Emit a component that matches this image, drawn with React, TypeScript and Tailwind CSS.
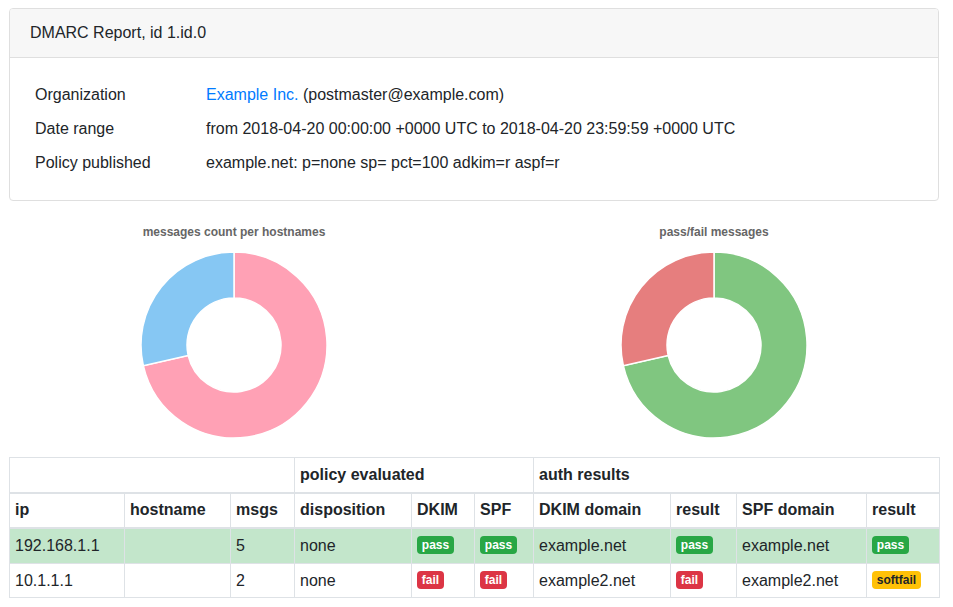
import React from "react";

type Seg = { value: number; color: string };

function arcPath(cx: number, cy: number, r0: number, r1: number, a0: number, a1: number) {
  const p = (r: number, a: number) => {
    const t = (a - 90) * (Math.PI / 180);
    return [cx + r * Math.cos(t), cy + r * Math.sin(t)];
  };
  const large = a1 - a0 > 180 ? 1 : 0;
  const [x0, y0] = p(r1, a0);
  const [x1, y1] = p(r1, a1);
  const [x2, y2] = p(r0, a1);
  const [x3, y3] = p(r0, a0);
  return `M${x0} ${y0} A${r1} ${r1} 0 ${large} 1 ${x1} ${y1} L${x2} ${y2} A${r0} ${r0} 0 ${large} 0 ${x3} ${y3} Z`;
}

function Donut({ title, segs }: { title: string; segs: Seg[] }) {
  const total = segs.reduce((s, x) => s + x.value, 0);
  let acc = 0;
  return (
    <div className="w-[468px] flex flex-col items-center">
      <div className="text-[12px] leading-[14px] font-bold text-[#666]">{title}</div>
      <svg width="190" height="190" viewBox="0 0 190 190" className="mt-[11px]">
        {segs.map((s, i) => {
          const a0 = (acc / total) * 360;
          acc += s.value;
          const a1 = (acc / total) * 360;
          return (
            <path
              key={i}
              d={arcPath(95, 95, 47, 93, a0, a1)}
              fill={s.color}
              stroke="#fff"
              strokeWidth="1.5"
            />
          );
        })}
      </svg>
    </div>
  );
}

function Badge({ kind }: { kind: "pass" | "fail" | "softfail" }) {
  const cls =
    kind === "pass"
      ? "bg-[#28a745] text-white"
      : kind === "fail"
      ? "bg-[#dc3545] text-white"
      : "bg-[#ffc107] text-[#212529]";
  return (
    <span
      className={`inline-block ${cls} text-[12px] font-bold leading-[12px] px-[4.8px] py-[3px] rounded-[4px] align-[2px]`}
    >
      {kind}
    </span>
  );
}

const th = "border border-[#dee2e6] px-[5px] py-[4.8px] text-left font-bold align-bottom";
const td = "border border-[#dee2e6] px-[5px] py-[4.8px] align-top";

export default function App() {
  return (
    <div
      className="px-[9px] pt-[8px] text-[16px] leading-[24px] text-[#212529] bg-white min-h-[607px]"
      style={{ fontFamily: '"Liberation Sans", Arial, sans-serif' }}
    >
      <div className="w-[930px] border border-[#dfdfdf] rounded-[4px] overflow-hidden">
        <div className="bg-[#f7f7f7] border-b border-[#dfdfdf] px-[20px] py-[12px]">
          DMARC Report, id 1.id.0
        </div>
        <div className="px-[20px] py-[20px]">
          <table className="border-collapse">
            <tbody>
              <tr>
                <td className="w-[171px] px-[5px] py-[5px]">Organization</td>
                <td className="px-[5px] py-[5px]">
                  <span className="text-[#007bff]">Example Inc.</span> (postmaster@example.com)
                </td>
              </tr>
              <tr>
                <td className="px-[5px] py-[5px]">Date range</td>
                <td className="px-[5px] py-[5px]">
                  from 2018-04-20 00:00:00 +0000 UTC to 2018-04-20 23:59:59 +0000 UTC
                </td>
              </tr>
              <tr>
                <td className="px-[5px] py-[5px]">Policy published</td>
                <td className="px-[5px] py-[5px]">example.net: p=none sp= pct=100 adkim=r aspf=r</td>
              </tr>
            </tbody>
          </table>
        </div>
      </div>

      <div className="flex w-[948px] -ml-[9px] gap-[12px] mt-[24px]">
        <Donut
          title="messages count per hostnames"
          segs={[
            { value: 5, color: "#ffa1b5" },
            { value: 2, color: "#86c7f3" },
          ]}
        />
        <Donut
          title="pass/fail messages"
          segs={[
            { value: 5, color: "#80c680" },
            { value: 2, color: "#e67e7e" },
          ]}
        />
      </div>

      <table className="w-[930px] table-fixed border-collapse mt-[17px]">
        <colgroup>
          <col className="w-[115px]" />
          <col className="w-[106px]" />
          <col className="w-[64px]" />
          <col className="w-[117px]" />
          <col className="w-[63px]" />
          <col className="w-[59px]" />
          <col className="w-[137px]" />
          <col className="w-[66px]" />
          <col className="w-[130px]" />
          <col className="w-[73px]" />
        </colgroup>
        <thead>
          <tr>
            <th colSpan={3} className={`${th} border-b-2`}></th>
            <th colSpan={3} className={`${th} border-b-2`}>policy evaluated</th>
            <th colSpan={4} className={`${th} border-b-2`}>auth results</th>
          </tr>
          <tr>
            <th className={`${th} border-b-2`}>ip</th>
            <th className={`${th} border-b-2`}>hostname</th>
            <th className={`${th} border-b-2`}>msgs</th>
            <th className={`${th} border-b-2`}>disposition</th>
            <th className={`${th} border-b-2`}>DKIM</th>
            <th className={`${th} border-b-2`}>SPF</th>
            <th className={`${th} border-b-2`}>DKIM domain</th>
            <th className={`${th} border-b-2`}>result</th>
            <th className={`${th} border-b-2`}>SPF domain</th>
            <th className={`${th} border-b-2`}>result</th>
          </tr>
        </thead>
        <tbody>
          <tr className="bg-[#c3e6cb]">
            <td className={td}>192.168.1.1</td>
            <td className={td}></td>
            <td className={td}>5</td>
            <td className={td}>none</td>
            <td className={td}><Badge kind="pass" /></td>
            <td className={td}><Badge kind="pass" /></td>
            <td className={td}>example.net</td>
            <td className={td}><Badge kind="pass" /></td>
            <td className={td}>example.net</td>
            <td className={td}><Badge kind="pass" /></td>
          </tr>
          <tr>
            <td className={td}>10.1.1.1</td>
            <td className={td}></td>
            <td className={td}>2</td>
            <td className={td}>none</td>
            <td className={td}><Badge kind="fail" /></td>
            <td className={td}><Badge kind="fail" /></td>
            <td className={td}>example2.net</td>
            <td className={td}><Badge kind="fail" /></td>
            <td className={td}>example2.net</td>
            <td className={td}><Badge kind="softfail" /></td>
          </tr>
        </tbody>
      </table>
    </div>
  );
}
